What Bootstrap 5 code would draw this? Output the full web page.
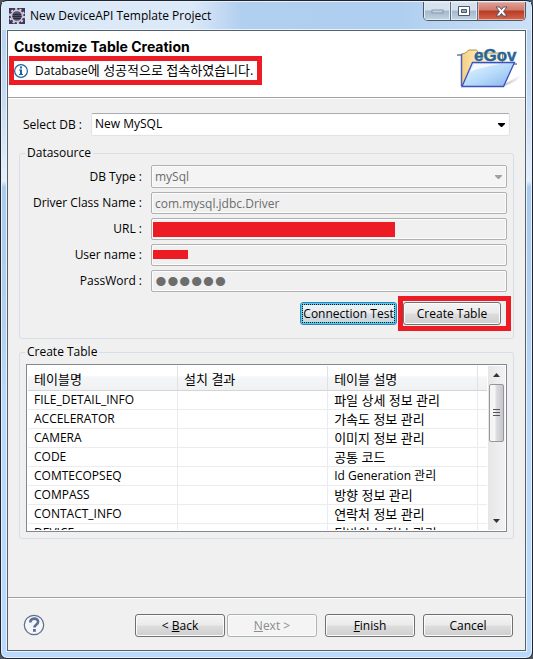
<!DOCTYPE html>
<html lang="ko">
<head>
<meta charset="utf-8">
<meta name="viewport" content="width=device-width, initial-scale=1">
<title>New DeviceAPI Template Project</title>
<link href="https://cdn.jsdelivr.net/npm/bootstrap@5.3.0/dist/css/bootstrap.min.css" rel="stylesheet">
<style>
:root { --ink: #000; --face: #f0f0f0; --flag: #ed1c24; }
body { font-family: "Open Sans", "Noto Sans CJK KR", sans-serif; font-size: 12px; line-height: 18px; color: var(--ink); background: #50565e; }
.hangul { font-size: 13px; }
.win { border: 1px solid #20242c; border-radius: 7px; padding: 0 6px 7px; background: linear-gradient(180deg, #b3cfee 0, #c3daf3 90px, #e4effb 180px, #a9cbee 186px, #b4d0ee 320px, #b9d9fb 400px, #b9dafc 100%); box-shadow: inset 0 0 0 1px #e4f1fd; }
.caption-bar { height: 28px; background: linear-gradient(90deg, #d9e8f8 0, #dce9f8 190px, #b1cfef 240px, #afcff0 75%, #cbe0f6 100%); margin: 1px -5px 0 -5px; padding-left: 6px; }
.caption-bar h1 { font-size: 12px; line-height: 18px; font-weight: 400; }
.sysbtns { margin-right: 5px; border: 1px solid #4c5866; border-top: 0; border-radius: 0 0 5px 5px; height: 19px; overflow: hidden; }
.sysbtns button { border: 0; border-right: 1px solid #5f6d7e; width: 27px; height: 18px; background: linear-gradient(#d5e1ee 0 45%, #a5b7cb 50%, #c3d3e4 100%); box-shadow: inset 0 0 0 1px #e1ebf5; }
.sysbtns button.shut { width: 47px; border-right: 0; background: linear-gradient(#e0a298 0, #d07a6c 45%, #b93a26 50%, #d4674c 100%); box-shadow: inset 0 0 0 1px #e6b3a9; }
.client { border: 1px solid #55606d; background: var(--face); box-shadow: 0 0 0 1px #e9f3fc; }
.banner { background: #fff; border-bottom: 1px solid #a0a0a0; box-shadow: 0 1px #fff; height: 67px; }
.banner h2 { font: bold 14px/18px Inter, "Liberation Sans", sans-serif; padding: 7px 0 0 6px; }
.flagged { border: 5px solid var(--flag); }
.note { margin-left: 1px; height: 29px; padding-right: 4px; gap: 7px; }
.form-area { padding: 15px 11px 0; }
.pick { padding: 0 4px; }
.pick label { width: 68px; }
select.box, input.box { font: inherit; width: 100%; border: 1px solid #b0b0b0; border-radius: 2px; box-shadow: inset 0 0 0 1px #fcfcfc; background-color: var(--face); color: #6d6d6d; padding: 0 3px; height: 22px; opacity: 1; }
select.box { appearance: none; height: 23px; background: #f4f4f4 url("data:image/svg+xml,%3Csvg xmlns='http://www.w3.org/2000/svg' width='7' height='4'%3E%3Cpath d='M0 0h7v1L4 4H3L0 1z' fill='%23a0a0a0'/%3E%3C/svg%3E") no-repeat right 4px center; }
select.box.live { color: #000; border-color: #abadb3 #e2e3ea #e2e3ea #e2e3ea; background-color: #fff; background-image: url("data:image/svg+xml,%3Csvg xmlns='http://www.w3.org/2000/svg' width='7' height='4'%3E%3Cpath d='M0 0h7v1L4 4H3L0 1z'/%3E%3C/svg%3E"); padding: 0 3px 2px; }
input.box[type=password] { font-family: "Liberation Sans", Arial, sans-serif; font-size: 34px; line-height: 20px; }
fieldset.group { border: 1px solid #d5dfe5; border-radius: 3px; padding: 0 6px 6px; }
fieldset.group legend { float: none; width: auto; font-size: 12px; line-height: 18px; padding: 0 2px; margin: 0 0 0 -1px; }
.fields { display: grid; grid-template-columns: 116px 1fr; column-gap: 9px; row-gap: 4px; align-items: center; padding-top: 3px; }
.fields label { text-align: right; white-space: nowrap; }
.mask-bar { position: absolute; left: 2px; background: var(--flag); }
.mask-url { top: 4px; width: 68%; height: 15px; }
.mask-user { top: 6px; width: 35px; height: 9px; }
.key { font: inherit; color: #000; border: 1px solid #707070; border-radius: 3px; background: linear-gradient(#f3f3f3 0, #ebebeb 48%, #dddddd 52%, #cfcfcf 100%); box-shadow: inset 0 0 0 1px #fbfbfb; height: 23px; width: 90px; padding: 0; line-height: 19px; white-space: nowrap; }
.key:disabled { color: #8c8c8c; border-color: #adb2b5; background: #f4f4f4; }
.key.focused { width: 97px; border-color: #3c7fb1; background: linear-gradient(#f0f2f3 0, #e8ecee 48%, #d8dee2 52%, #c9d2d8 100%); box-shadow: inset 0 0 0 2px #46d0f5; outline: 1px dotted #111; outline-offset: -3px; }
.key.wide { width: 98px; }
.actions { margin: 4px -4px 0 0; gap: 1px; padding-bottom: 1px; }
.actions .flagged { padding: 1px 5px 1px 0; }
.grid-box { border: 1px solid #828790; background: #fff; height: 168px; padding: 1px; margin-top: 3px; }
.rows { table-layout: fixed; width: 100%; border-collapse: separate; border-spacing: 0; }
.rows th { font-weight: 400; height: 25px; padding: 1px 6px 0; border-bottom: 1px solid #d5d5d5; border-right: 1px solid #dfe3e8; background: linear-gradient(#fff 0 40%, #f5f6f8 45%, #f0f1f3 100%); line-height: 18px; white-space: nowrap; }
.rows td { height: 19px; padding: 0 6px; line-height: 18px; border-bottom: 1px solid #ececec; border-right: 1px solid #e9edf3; white-space: nowrap; }
.rows th:last-child, .rows td:last-child { border-right: 0; }
.rail { width: 17px; background: linear-gradient(90deg, #e6e6e6, #f2f2f2); margin-left: 1px; }
.thumb { width: 15px; height: 58px; border: 1px solid #979797; border-radius: 2px; background: linear-gradient(90deg, #f5f5f5 0 35%, #dcdcdf 50%, #c5c7cc 100%); }
.foot { border-top: 1px solid #a0a0a0; box-shadow: inset 0 1px #fff; height: 53px; padding: 2px 12px 0 15px; }
.foot .key + .key { margin-left: 8px; }
.foot .key + .key:disabled { margin-left: 2px; }
</style>
<script src="https://cdn.jsdelivr.net/npm/bootstrap@5.3.0/dist/js/bootstrap.bundle.min.js"></script>
</head>
<body>
<main class="win min-vh-100 d-flex flex-column">
  <header class="caption-bar d-flex justify-content-between">
    <div class="d-flex align-items-center gap-1">
      <svg width="18" height="18" viewBox="0 0 18 18" aria-hidden="true"><rect x="1" y="1" width="16" height="16" fill="#41355a"/><circle cx="9" cy="9" r="7" fill="none" stroke="#d8d5de" stroke-width="2" stroke-dasharray="2.2 2.2"/><circle cx="9" cy="9" r="5.6" fill="#51506a" stroke="#c9c6d0" stroke-width="1.6"/><path d="M5 7.500h8M4.500 9.500h9M5.500 11.500h7" stroke="#2c2844"/></svg>
      <h1 class="m-0">New DeviceAPI Template Project</h1>
    </div>
    <div class="sysbtns d-flex">
      <button type="button" class="p-0 d-flex justify-content-center align-items-center" aria-label="Minimize"><svg width="13" height="6"><rect x="1" y="2" width="11" height="3" fill="#c3cfdc" stroke="#8c9aab"/></svg></button>
      <button type="button" class="p-0 d-flex justify-content-center align-items-center" aria-label="Maximize"><svg width="12" height="10"><path d="M.5.500h11v9H.5z" fill="#fff" stroke="#4b5666"/><path d="M3.500 3.500h5v3h-5z" fill="#93a7bd" stroke="#4b5666"/></svg></button>
      <button type="button" class="shut p-0 d-flex justify-content-center align-items-center" aria-label="Close"><svg width="13" height="11" viewBox="0 0 13 11"><path d="M1 1h3.500l2 2.500L8.500 1H12L8.500 5.500 12 10H8.500L6.500 7.500 4.500 10H1l3.500-4.500z" fill="#fff" stroke="#535666"/></svg></button>
    </div>
  </header>

  <div class="client flex-grow-1 d-flex flex-column">
    <div class="banner d-flex justify-content-between">
      <div>
        <h2 class="m-0">Customize Table Creation</h2>
        <div class="note flagged d-inline-flex align-items-center">
          <svg width="14" height="14" viewBox="1 1 14 14" aria-hidden="true"><circle cx="8" cy="8" r="6.400" fill="#fff" stroke="#1d659c" stroke-width="1.200"/><path d="M7 3.500h2v2H7zM6 6.500h3V11h1v1H6v-1h1V7.500H6z" fill="#1d659c"/></svg>
          <span>Database<span class="hangul">에 성공적으로 접속하였습니다.</span></span>
        </div>
      </div>
      <svg class="flex-shrink-0" width="70" height="66" viewBox="455 30 70 66" role="img" aria-label="eGov">
        <defs>
          <linearGradient id="fold" x1="0" y1="0" x2="1" y2="1"><stop offset="0" stop-color="#e8f5ff"/><stop offset=".5" stop-color="#b9dcfa"/><stop offset="1" stop-color="#86b4ee"/></linearGradient>
          <linearGradient id="back" x1="0" y1="0" x2="1" y2="0"><stop offset="0" stop-color="#f3cf83"/><stop offset=".5" stop-color="#fdf0c4"/><stop offset="1" stop-color="#fff8de"/></linearGradient>
          <linearGradient id="shade" x1="0" y1="0" x2="1" y2="0"><stop offset="0" stop-color="#999"/><stop offset="1" stop-color="#fff"/></linearGradient>
        </defs>
        <path d="M506 82 523 73 516 80 503 86z" fill="url(#shade)" opacity=".6"/>
        <path d="M457 54h8M502 63h15" stroke="#999ba5" stroke-width="2"/>
        <path d="M461.500 85V53l4-1 3-3h8l2 3h24v15z" fill="url(#back)" stroke="#b0903c"/>
        <path d="M461.500 85V53" stroke="#4f5cc0" stroke-width="1.500"/>
        <path d="M462 85.500 472.500 61.500H514.500L503.500 85.500z" fill="url(#fold)" stroke="#3f50bd" stroke-width="1.300"/>
        <path d="M470 71 474 63h26c-10 2-21 4-30 8z" fill="#fff" opacity=".7"/>
        <text x="474" y="60" font-family="Liberation Sans, Arial, sans-serif" font-weight="700" font-size="17" fill="#27649b" stroke="#27649b" stroke-width=".4">eGov</text>
      </svg>
    </div>

    <form class="form-area flex-grow-1">
      <div class="pick d-flex align-items-center">
        <label for="db" class="text-nowrap flex-shrink-0">Select DB :</label>
        <select id="db" class="box live"><option>New MySQL</option></select>
      </div>

      <fieldset class="group mt-2">
        <legend>Datasource</legend>
        <div class="fields">
          <label for="type">DB Type :</label>
          <select id="type" class="box" disabled><option>mySql</option></select>
          <label for="driver">Driver Class Name :</label>
          <input id="driver" class="box" value="com.mysql.jdbc.Driver" disabled>
          <label for="url">URL :</label>
          <div class="position-relative d-flex"><input id="url" class="box" disabled><span class="mask-bar mask-url"></span></div>
          <label for="user">User name :</label>
          <div class="position-relative d-flex"><input id="user" class="box" disabled><span class="mask-bar mask-user"></span></div>
          <label for="pass">PassWord :</label>
          <input id="pass" class="box" type="password" value="secret" disabled>
        </div>
        <div class="actions d-flex justify-content-end align-items-center">
          <button type="button" class="key focused">Connection Test</button>
          <div class="flagged"><button type="button" class="key wide">Create Table</button></div>
        </div>
      </fieldset>

      <fieldset class="group mt-1">
        <legend>Create Table</legend>
        <div class="grid-box d-flex">
          <div class="flex-grow-1 overflow-hidden">
            <table class="rows">
              <colgroup><col style="width:32.7%"><col style="width:32.7%"><col style="width:32.7%"><col></colgroup>
              <thead><tr class="hangul"><th>테이블명</th><th>설치 결과</th><th>테이블 설명</th><th class="p-0"></th></tr></thead>
              <tbody>
                <tr><td>FILE_DETAIL_INFO</td><td></td><td class="hangul">파일 상세 정보 관리</td><td class="p-0"></td></tr>
                <tr><td>ACCELERATOR</td><td></td><td class="hangul">가속도 정보 관리</td><td class="p-0"></td></tr>
                <tr><td>CAMERA</td><td></td><td class="hangul">이미지 정보 관리</td><td class="p-0"></td></tr>
                <tr><td>CODE</td><td></td><td class="hangul">공통 코드</td><td class="p-0"></td></tr>
                <tr><td>COMTECOPSEQ</td><td></td><td>Id Generation 관리</td><td class="p-0"></td></tr>
                <tr><td>COMPASS</td><td></td><td class="hangul">방향 정보 관리</td><td class="p-0"></td></tr>
                <tr><td>CONTACT_INFO</td><td></td><td class="hangul">연락처 정보 관리</td><td class="p-0"></td></tr>
                <tr><td>DEVICE</td><td></td><td class="hangul">디바이스 정보 관리</td><td class="p-0"></td></tr>
              </tbody>
            </table>
          </div>
          <div class="rail d-flex flex-column align-items-center flex-shrink-0" aria-hidden="true">
            <svg width="15" height="18" viewBox="0 0 15 18"><path d="M4 11 7.500 7 11 11z" fill="#333"/></svg>
            <div class="thumb d-flex align-items-center justify-content-center"><svg width="7" height="9"><path d="M0 .5h7M0 3.500h7M0 6.500h7" stroke="#555"/></svg></div>
            <svg class="mt-auto" width="15" height="18" viewBox="0 0 15 18"><path d="M4 7 7.500 11 11 7z" fill="#333"/></svg>
          </div>
        </div>
      </fieldset>
    </form>

    <footer class="foot d-flex align-items-center">
      <button type="button" class="btn p-0 border-0 me-auto d-flex" aria-label="Help"><svg width="22" height="22" viewBox="0 0 22 22"><circle cx="11" cy="11" r="9.700" fill="#f4f6f9" stroke="#5d6f8d" stroke-width="1.200"/><path d="M7.300 8.600c0-5.400 7.800-5 7.800-.8 0 2.900-3.700 2.900-3.700 5.600" fill="none" stroke="#5d6f93" stroke-width="2.600"/><rect x="10" y="15" width="2.800" height="2.800" fill="#5d6f93"/></svg></button>
      <button type="button" class="key">&lt; <u>B</u>ack</button>
      <button type="button" class="key" disabled><u>N</u>ext &gt;</button>
      <button type="button" class="key"><u>F</u>inish</button>
      <button type="button" class="key">Cancel</button>
    </footer>
  </div>
</main>
</body>
</html>
